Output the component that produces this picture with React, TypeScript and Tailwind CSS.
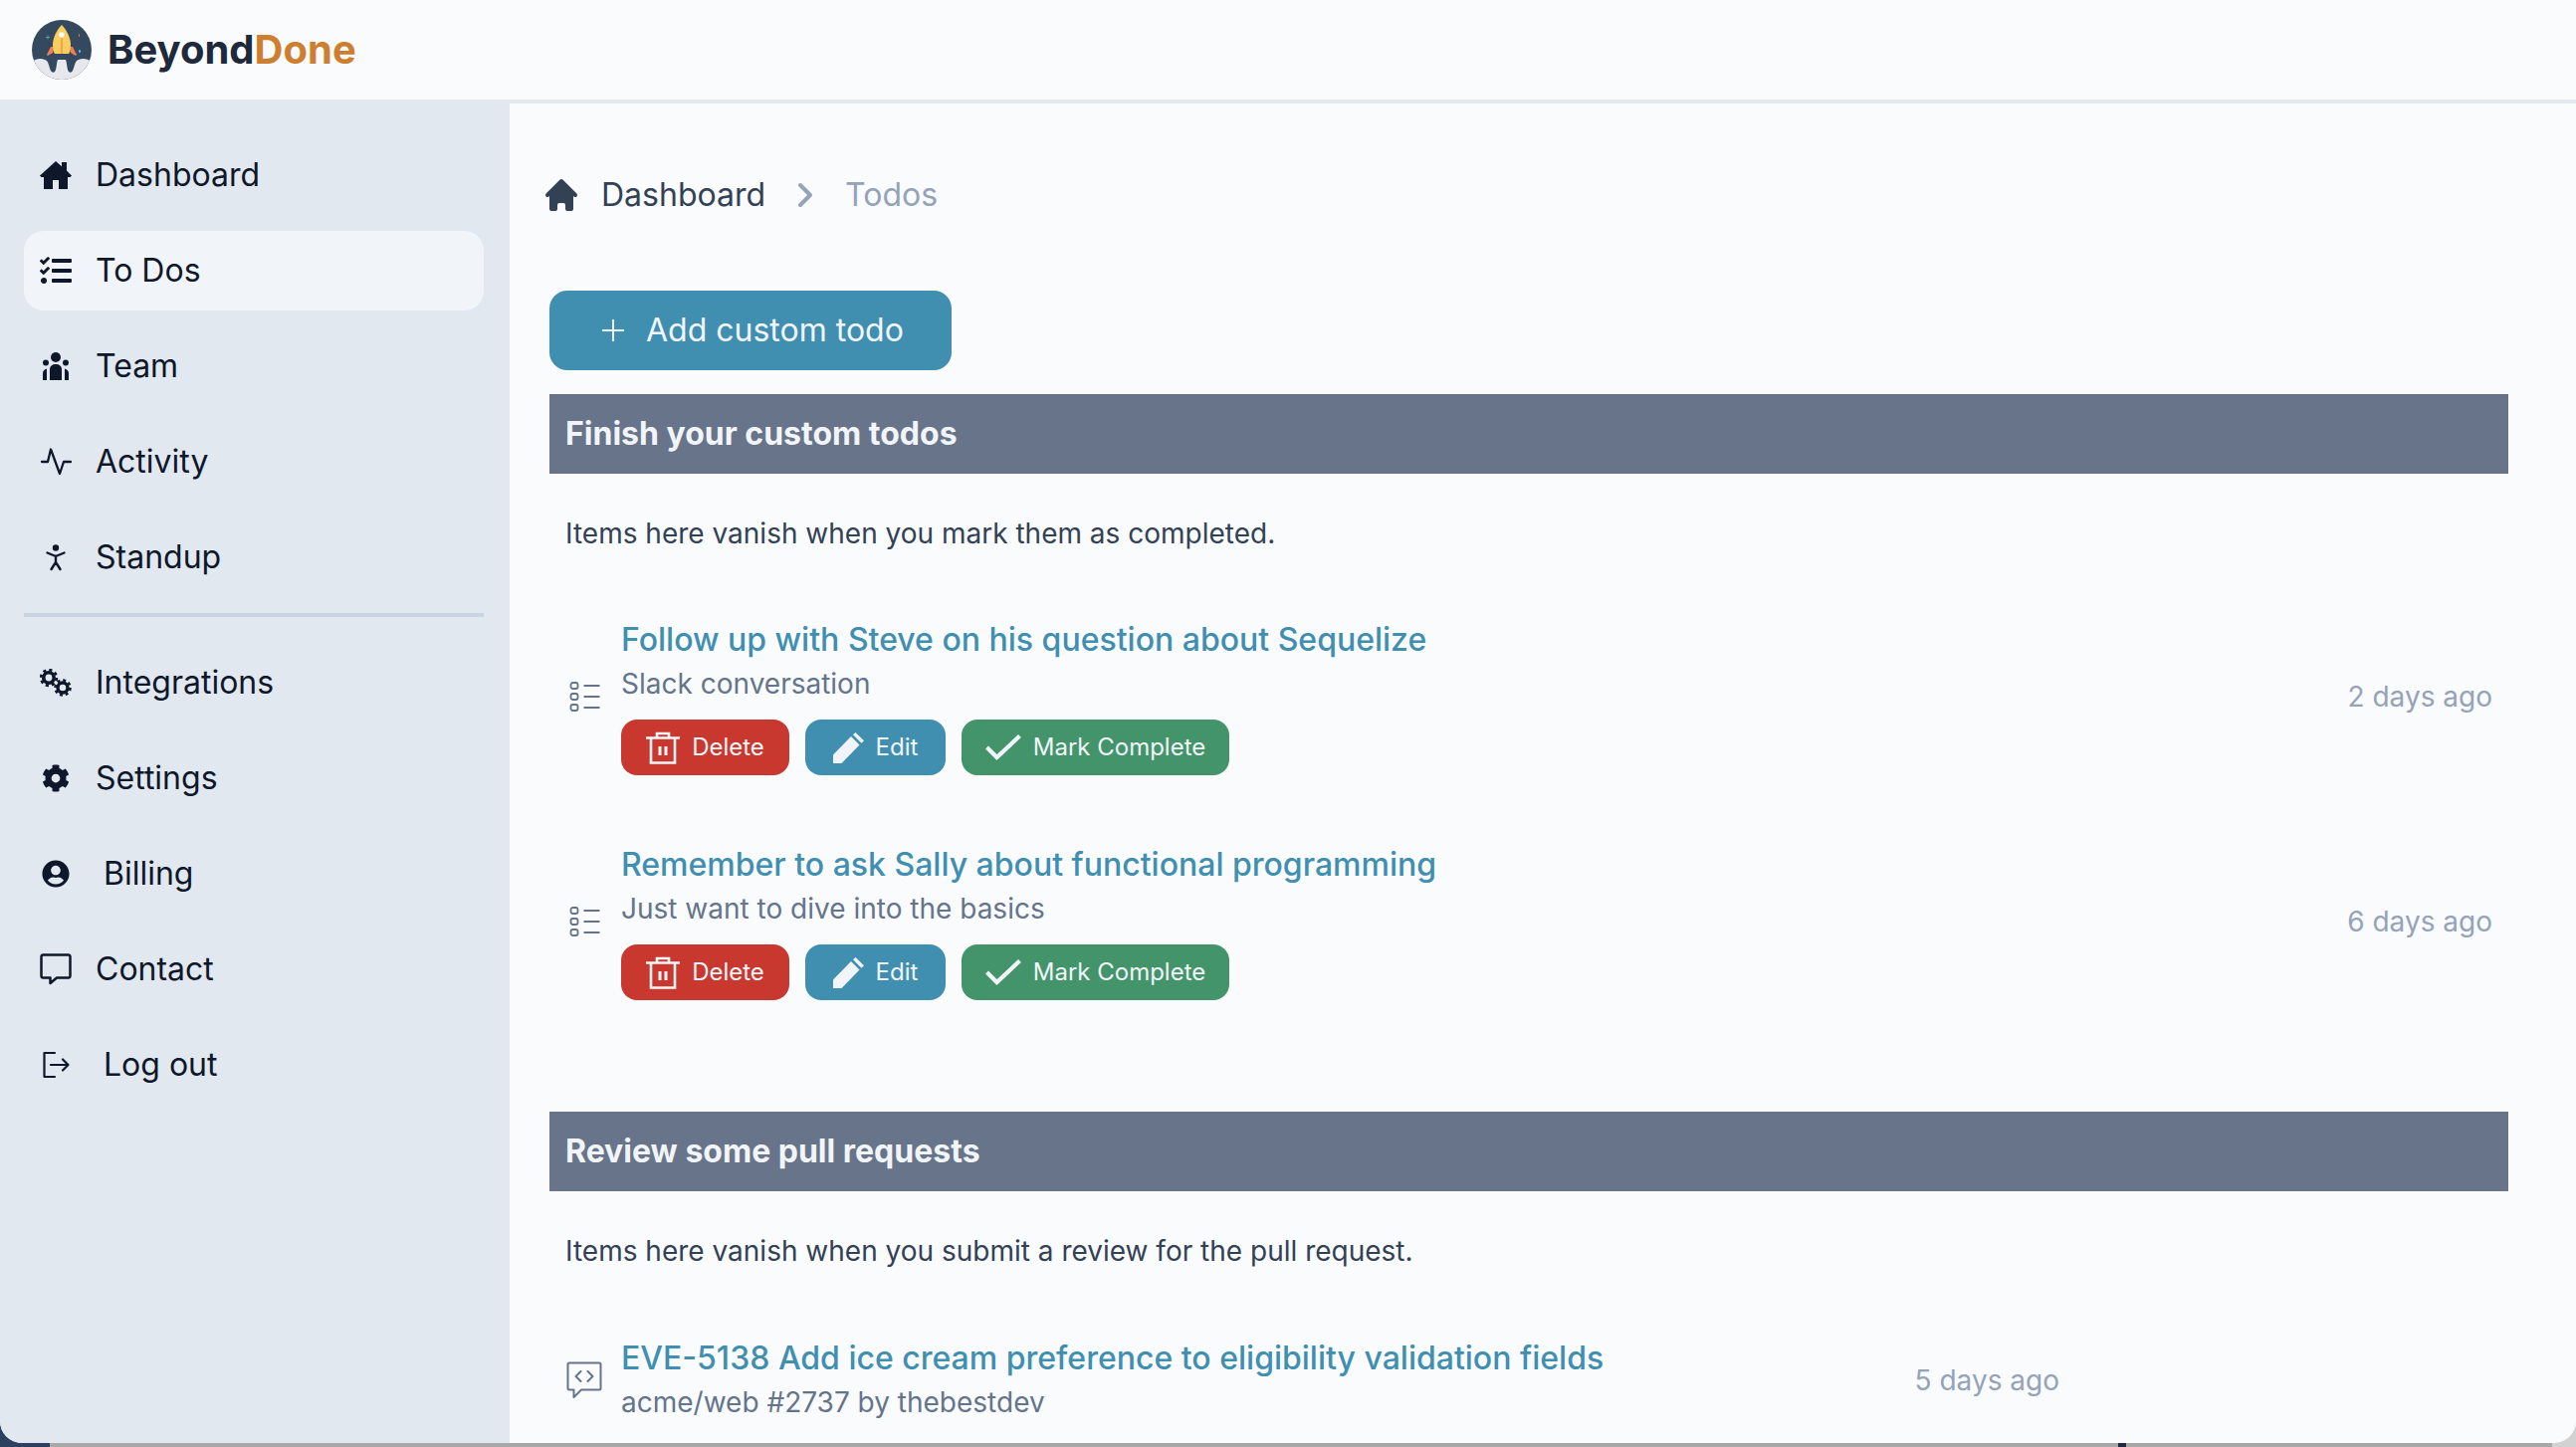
import type { ReactNode } from 'react';
import { FaCog, FaTasks, FaUserCircle } from 'react-icons/fa';
import { HiHome } from 'react-icons/hi';

function RocketLogo() {
  return (
    <svg viewBox="0 0 60 60" className="h-[60px] w-[60px] shrink-0">
      <defs>
        <clipPath id="logo-clip">
          <circle cx="30" cy="30" r="30" />
        </clipPath>
      </defs>
      <g clipPath="url(#logo-clip)">
        <rect width="60" height="60" fill="#34495e" />
        <path d="M0 42c4-3 9-4 13-2 4 1 4 7 6 11 2 3 4 2 5-1 1-4 1-8 2-10h8c1 2 1 6 2 10 1 3 3 4 5 1 2-4 2-10 6-11 4-2 9-1 13 2v18H0z" fill="#e6e8ed" />
        <path d="M19 27l-4 8 1 1 5-3 2-6zM41 27l4 8-1 1-5-3-2-6z" fill="#ed7f56" />
        <path d="M30 5c5 5 9 13 9 20 0 3-1 8-2 9H23c-1-1-2-6-2-9 0-7 4-15 9-20z" fill="#fbcd5f" />
        <rect x="29" y="18" width="2" height="16" fill="#eea94a" />
        <circle cx="30" cy="15" r="2.8" fill="#ffffff" />
        <path d="M14 17.5h4M16 15.5v4" stroke="#52b69a" strokeWidth="0.8" />
        <path d="M47.5 14v3" stroke="#ed7f56" strokeWidth="0.8" />
        <path d="M48 29.5l1.2 2-1.2 2-1.2-2z" fill="#6cc3e8" />
      </g>
    </svg>
  );
}

function SidebarHomeIcon() {
  return (
    <svg viewBox="0 0 32 28" fill="currentColor" className="h-7 w-8">
      <path d="M16 0l6 5.200V1h5v8.500l5 5-1.500 1.500H28v12h-9v-9h-6v9H4V16H1.500L0 14.500z" />
    </svg>
  );
}

function TeamIcon() {
  return (
    <svg viewBox="0 0 32 32" fill="currentColor" className="h-8 w-8">
      <circle cx="16" cy="7" r="5" />
      <circle cx="6" cy="12.500" r="3" />
      <circle cx="26" cy="12.500" r="3" />
      <path d="M10 30V19c0-3 2.500-5 6-5s6 2 6 5v11z" />
      <path d="M3 30v-7c0-2 1.500-4 4-4.500v11.500zM29 30v-7c0-2-1.500-4-4-4.500v11.500z" />
    </svg>
  );
}

function PulseIcon() {
  return (
    <svg viewBox="0 0 32 32" fill="none" stroke="currentColor" strokeWidth="2.300" strokeLinecap="round" strokeLinejoin="round" className="h-8 w-8">
      <path d="M2 16h6l3-12.500L20 28l4-12h7" />
    </svg>
  );
}

function StandupIcon() {
  return (
    <svg viewBox="0 0 32 32" fill="none" stroke="currentColor" strokeWidth="2.400" strokeLinecap="round" strokeLinejoin="round" className="h-8 w-8">
      <circle cx="16" cy="6.500" r="3.200" fill="currentColor" stroke="none" />
      <path d="M7.500 11.500L16 15l8.500-3.500M16 15v6M16 21l-4.500 7M16 21l4.500 7" />
    </svg>
  );
}

function CogsIcon() {
  return (
    <svg viewBox="0 0 32 28" fill="none" stroke="currentColor" className="h-7 w-8">
      <circle cx="9" cy="9" r="5.200" strokeWidth="3.600" />
      <circle cx="9" cy="9" r="7.800" strokeWidth="2.800" strokeDasharray="3.100 3.030" />
      <circle cx="23" cy="19" r="5" strokeWidth="3.400" />
      <circle cx="23" cy="19" r="7.500" strokeWidth="2.600" strokeDasharray="2.950 2.940" />
    </svg>
  );
}

function ContactIcon() {
  return (
    <svg viewBox="0 0 32 32" fill="none" stroke="currentColor" strokeWidth="2.500" className="h-8 w-8" strokeLinejoin="round">
      <path d="M3 1.500h26a1.600 1.600 0 0 1 1.500 1.500v20a1.600 1.600 0 0 1-1.500 1.500H17l-6.500 5.500v-5.500H3A1.600 1.600 0 0 1 1.500 23V3A1.600 1.600 0 0 1 3 1.500z" />
    </svg>
  );
}

function LogoutIcon() {
  return (
    <svg viewBox="0 0 32 32" fill="none" stroke="currentColor" strokeWidth="2.200" strokeLinecap="round" strokeLinejoin="round" className="h-8 w-8">
      <path d="M15 4H4.500v24H15" />
      <path d="M11 16h17M23 10.500l5.500 5.500-5.500 5.500" />
    </svg>
  );
}

function ListIcon() {
  return (
    <svg viewBox="0 0 32 32" fill="none" stroke="#64748b" strokeWidth="1.800" className="h-8 w-8 shrink-0">
      <rect x="1.500" y="2" width="7" height="6" rx="2" />
      <rect x="1.500" y="13" width="7" height="6" rx="2" />
      <rect x="1.500" y="24" width="7" height="6" rx="2" />
      <path d="M14.500 5h16M14.500 16h16M14.500 27h16" />
    </svg>
  );
}

function CodeCommentIcon() {
  return (
    <svg viewBox="0 0 36 38" fill="none" stroke="#64748b" strokeWidth="2" strokeLinejoin="round" className="h-[38px] w-9 shrink-0">
      <path d="M3 1.500h30a1.500 1.500 0 0 1 1.500 1.500v24a1.500 1.500 0 0 1-1.500 1.500H15L7.500 36v-7.500H3A1.500 1.500 0 0 1 1.500 27V3A1.500 1.500 0 0 1 3 1.500z" />
      <path d="M14.500 10l-5 5 5 5M21.500 10l5 5-5 5" strokeLinecap="round" />
    </svg>
  );
}

function TrashIcon() {
  return (
    <svg viewBox="0 0 34 33" fill="none" stroke="currentColor" strokeWidth="2.600" className="h-[33px] w-[34px]">
      <path d="M0 6.500h34M11 6V2h12v4" />
      <path d="M5 7v24.500h24V7" />
      <path d="M14 15v9M20 15v9" strokeWidth="3" />
    </svg>
  );
}

function PencilIcon() {
  return (
    <svg viewBox="0 0 31 31" fill="currentColor" className="h-[31px] w-[31px]">
      <path d="M0 31v-8.500L18 4l8.500 8.500L8.500 31z" />
      <path d="M20 2.200L22.500 0 31 8.200l-2.500 2.500z" />
    </svg>
  );
}

function CheckIcon() {
  return (
    <svg viewBox="0 0 36 26" fill="none" stroke="currentColor" strokeWidth="4.200" strokeLinejoin="miter" className="h-[26px] w-9">
      <path d="M1.500 13l10 10L34.500 1.500" />
    </svg>
  );
}

function ActionButton({ color, width, icon, label }: { color: string; width: string; icon: ReactNode; label: string }) {
  return (
    <button className={`flex h-14 items-center justify-center gap-3 rounded-2xl text-[24px] text-[#f1f5f9] ${color} ${width}`}>
      {icon}
      <span>{label}</span>
    </button>
  );
}

function TodoItem({ title, detail, age }: { title: string; detail: string; age: string }) {
  return (
    <div className="flex items-center pl-5 pr-4">
      <ListIcon />
      <div className="ml-5 flex-1">
        <div className="h-11 text-[32px] leading-[44px] font-medium text-[#408fb0]">{title}</div>
        <div className="h-11 text-[28px] leading-[44px] text-[#64748b]">{detail}</div>
        <div className="mt-[14px] flex gap-4">
          <ActionButton color="bg-[#c9382f]" width="w-[169px]" icon={<TrashIcon />} label="Delete" />
          <ActionButton color="bg-[#408fb0]" width="w-[141px]" icon={<PencilIcon />} label="Edit" />
          <ActionButton color="bg-[#43946b]" width="w-[269px]" icon={<CheckIcon />} label="Mark Complete" />
        </div>
      </div>
      <div className="text-[28px] text-[#94a3b8]">{age}</div>
    </div>
  );
}

function SectionHeader({ title, note }: { title: string; note: string }) {
  return (
    <>
      <div className="flex h-20 items-center bg-[#68748a] px-4 text-[32px] font-bold text-[#f1f5f9]">{title}</div>
      <p className="mt-[40px] px-4 text-[28px] leading-10 text-[#334155]">{note}</p>
    </>
  );
}

const primaryNav = [
  { label: 'Dashboard', icon: <SidebarHomeIcon /> },
  { label: 'To Dos', icon: <FaTasks className="h-8 w-8" />, active: true },
  { label: 'Team', icon: <TeamIcon /> },
  { label: 'Activity', icon: <PulseIcon /> },
  { label: 'Standup', icon: <StandupIcon /> },
];

const secondaryNav = [
  { label: 'Integrations', icon: <CogsIcon /> },
  { label: 'Settings', icon: <FaCog className="h-7 w-7" /> },
  { label: 'Billing', icon: <FaUserCircle className="h-7 w-7" />, wide: true },
  { label: 'Contact', icon: <ContactIcon /> },
  { label: 'Log out', icon: <LogoutIcon />, wide: true },
];

function NavRow({ label, icon, active, wide }: { label: string; icon: ReactNode; active?: boolean; wide?: boolean }) {
  return (
    <a className={`flex h-20 items-center rounded-[20px] px-4 text-[32px] text-[#0f172a] ${active ? 'bg-[#f1f5f9]' : ''}`}>
      <span className="flex w-8 shrink-0 items-center justify-center">{icon}</span>
      <span className={wide ? 'ml-8' : 'ml-6'}>{label}</span>
    </a>
  );
}

export default function App() {
  return (
    <div className="relative h-[1454px] w-full overflow-hidden bg-[#a8a8a8] font-['Inter',sans-serif]">
      {/* desktop showing under the rounded window */}
      <div className="absolute bottom-0 left-0 h-8 w-[50px] bg-[#2c4060]" />
      <div className="absolute right-0 bottom-0 h-8 w-6 bg-[#d2d2d2]" />
      <div className="absolute bottom-0 left-[2128px] h-1 w-2 bg-[#1e293b]" />

      <div className="relative flex h-[1450px] flex-col overflow-hidden rounded-b-[22px] bg-[#fafbfd]">
        <header className="flex h-[104px] shrink-0 items-start border-b-4 border-[#e2e8f0] pt-5 pl-8">
          <RocketLogo />
          <span className="ml-4 text-[40px] leading-[60px] font-bold text-[#1e293b]">
            Beyond<span className="text-[#cd7f2f]">Done</span>
          </span>
        </header>

        <div className="-mt-1 flex min-h-0 flex-1">
          <aside className="w-[512px] shrink-0 bg-[#e2e8f0] pt-9 pr-[26px] pl-6">
            <nav className="flex flex-col gap-4">
              {primaryNav.map((item) => (
                <NavRow key={item.label} {...item} />
              ))}
            </nav>
            <div className="mt-[16px] mb-[26px] h-1 bg-[#cbd5e1]" />
            <nav className="flex flex-col gap-4">
              {secondaryNav.map((item) => (
                <NavRow key={item.label} {...item} />
              ))}
            </nav>
          </aside>

          <main className="mt-1 min-w-0 flex-1 overflow-hidden pr-[68px] pl-10">
            <div className="mt-[72px] -ml-[8px] flex h-10 items-center text-[32px] text-[#334155]">
              <HiHome className="h-10 w-10" />
              <span className="ml-[20px]">Dashboard</span>
              <svg viewBox="0 0 16 26" fill="none" stroke="#94a3b8" strokeWidth="4" strokeLinecap="round" strokeLinejoin="round" className="ml-8 h-[26px] w-4">
                <path d="M3 3l10 10L3 23" />
              </svg>
              <span className="ml-[32px] text-[#94a3b8]">Todos</span>
            </div>

            <button className="mt-[76px] flex h-20 w-[404px] items-center justify-start gap-[22px] rounded-[18px] bg-[#408fb0] pl-[53px] text-[32px] text-[#f1f5f9]">
              <svg viewBox="0 0 22 22" stroke="currentColor" strokeWidth="2" className="h-[22px] w-[22px]">
                <path d="M11 0v22M0 11h22" />
              </svg>
              Add custom todo
            </button>

            <div className="mt-6">
              <SectionHeader title="Finish your custom todos" note="Items here vanish when you mark them as completed." />
              <div className="mt-[65px] flex flex-col gap-[68px]">
                <TodoItem title="Follow up with Steve on his question about Sequelize" detail="Slack conversation" age="2 days ago" />
                <TodoItem title="Remember to ask Sally about functional programming" detail="Just want to dive into the basics" age="6 days ago" />
              </div>
            </div>

            <div className="mt-[112px]">
              <SectionHeader title="Review some pull requests" note="Items here vanish when you submit a review for the pull request." />
              <div className="mt-[66px] flex w-[1517px] items-center pl-[17px]">
                <CodeCommentIcon />
                <div className="ml-[19px] flex-1">
                  <div className="h-11 text-[32px] leading-[44px] font-medium text-[#408fb0]">EVE-5138 Add ice cream preference to eligibility validation fields</div>
                  <div className="h-11 text-[28px] leading-[44px] text-[#64748b]">acme/web #2737 by thebestdev</div>
                </div>
                <div className="text-[28px] text-[#94a3b8]">5 days ago</div>
              </div>
            </div>
          </main>
        </div>
      </div>
    </div>
  );
}
